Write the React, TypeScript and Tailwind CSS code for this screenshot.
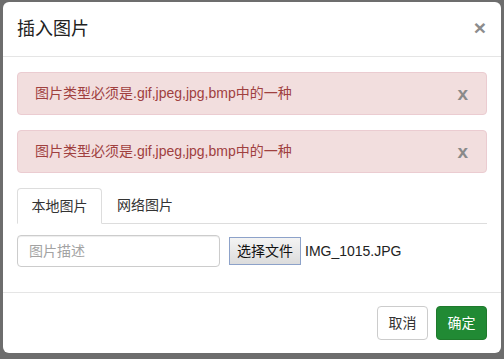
import React from "react";

const font = { fontFamily: '"Liberation Sans", "Noto Sans CJK SC", sans-serif' };

function Alert({ text }: { text: string }) {
  return (
    <div className="flex h-[43px] items-center justify-between rounded border border-[#ebccd1] bg-[#f2dede] pl-[17px] pr-[18px] text-[14px] text-[#a0403f]">
      <span>{text}</span>
      <span className="text-[19px] font-bold leading-none text-[#8a8a8a]">x</span>
    </div>
  );
}

export default function App() {
  return (
    <div className="h-[359px] w-[504px] overflow-hidden bg-[#6d6d6d] pl-[3px] pt-[2px]" style={font}>
      <div className="flex h-[351px] w-[498px] flex-col rounded-md bg-white">
        {/* Header */}
        <div className="flex h-[55px] items-center justify-between border-b border-[#e5e5e5] pl-[14px] pr-[15px]">
          <h4 className="text-[18px] text-[#222]">插入图片</h4>
          <span className="mt-[-4px] text-[21px] font-bold leading-none text-[#8c8c8c]">×</span>
        </div>

        {/* Body */}
        <div className="flex flex-1 flex-col px-[14px] pt-[15px]">
          <div className="flex flex-col gap-[15px]">
            <Alert text="图片类型必须是.gif,jpeg,jpg,bmp中的一种" />
            <Alert text="图片类型必须是.gif,jpeg,jpg,bmp中的一种" />
          </div>

          <div className="mt-[15px] flex h-[36px] border-b border-[#ddd] text-[14px] text-[#333]">
            <div className="-mb-px flex w-[85px] items-center justify-center rounded-t border border-b-white border-[#ddd] bg-white">
              本地图片
            </div>
            <div className="flex items-center px-[15px]">网络图片</div>
          </div>

          <div className="mt-[11px] flex items-center">
            <input
              className="h-[32px] w-[203px] rounded border border-[#ccc] px-[11px] text-[14px] text-[#555] placeholder:text-[#a3a3a3] shadow-[inset_0_1px_1px_rgba(0,0,0,0.075)]"
              placeholder="图片描述"
            />
            <div className="ml-[9px] flex h-[28px] w-[72px] items-center justify-center border border-[#8da2c9] bg-gradient-to-b from-[#f4f4f4] to-[#dcdcdc] text-[14px] text-[#111]">
              选择文件
            </div>
            <span className="ml-[4px] text-[14px] text-[#222]">IMG_1015.JPG</span>
          </div>
        </div>

        {/* Footer */}
        <div className="flex h-[61px] items-center justify-end gap-[8px] border-t border-[#e5e5e5] pr-[14px]">
          <button className="h-[34px] w-[51px] rounded border border-[#ccc] bg-white text-[14px] text-[#333]">
            取消
          </button>
          <button className="h-[34px] w-[51px] rounded border border-[#1f7a2c] bg-[#218a34] text-[14px] text-white">
            确定
          </button>
        </div>
      </div>
    </div>
  );
}
